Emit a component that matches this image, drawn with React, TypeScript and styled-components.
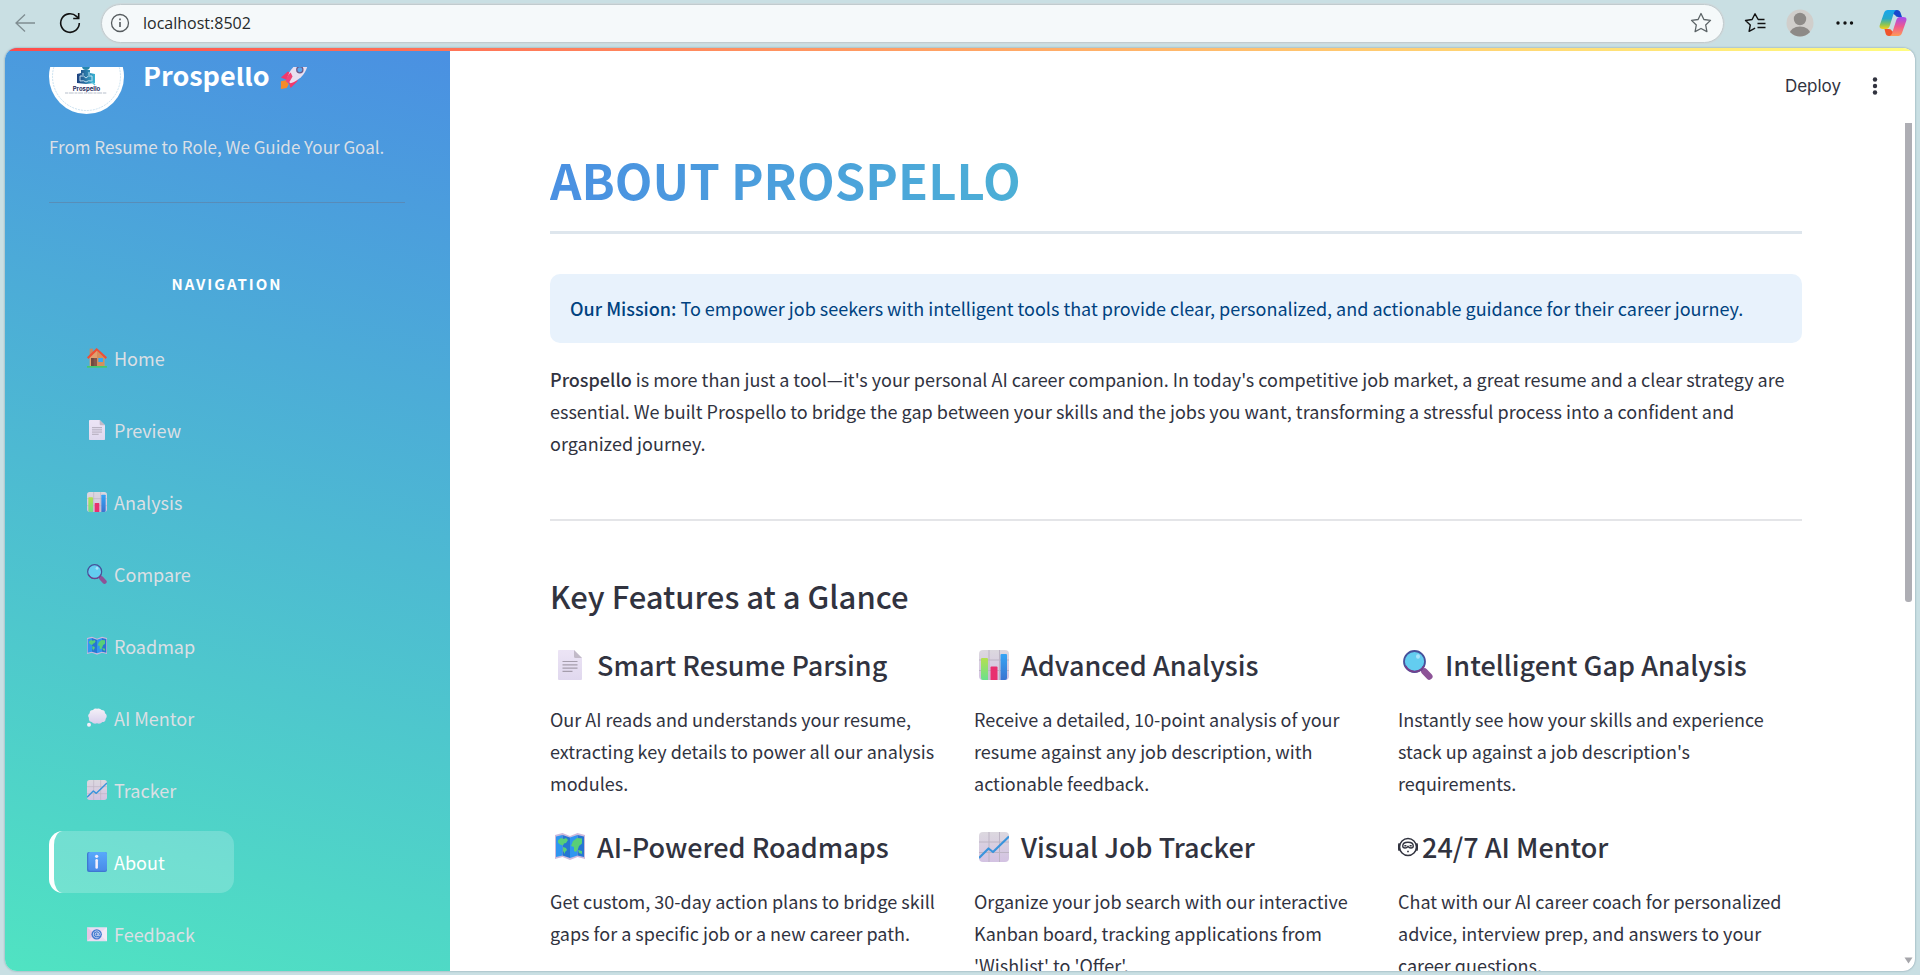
import React from "react";
import styled, { createGlobalStyle, css } from "styled-components";

const fontBody = `"Noto Sans CJK SC", "Open Sans", sans-serif`;

const GlobalStyle = createGlobalStyle`
  *, *::before, *::after { box-sizing: border-box; }
  body { margin: 0; background: #c9dfe3; font-family: ${fontBody}; color: #31333f; }
  h1, h2, h3, p, ul { margin: 0; padding: 0; }
  button { border: 0; background: none; padding: 0; font: inherit; color: inherit; cursor: pointer; }
`;

/* ---------- browser window ---------- */

const Window = styled.div`
  display: flex;
  flex-direction: column;
  height: 100vh;
  overflow: hidden;
  padding: 0 5px 4px;
`;

const Toolbar = styled.header`
  display: flex;
  align-items: center;
  flex: none;
  height: 48px;
  padding: 0 7px 2px 10px;
  color: #111;
`;

const ToolButton = styled.button<{ $space?: number }>`
  display: flex;
  align-items: center;
  justify-content: center;
  width: 20px;
  height: 36px;
  margin-right: ${(p) => p.$space ?? 0}px;
  svg { display: block; flex: none; }
`;

const AddressBar = styled.div`
  display: flex;
  align-items: center;
  flex: 1;
  height: 39px;
  margin-right: 21px;
  padding: 0 12px 0 8px;
  border: 1px solid #c1cbce;
  border-radius: 20px;
  background: #f5f9fa;
  box-shadow: 0 0 0 1px #cdd9dc;
`;

const AddressInput = styled.input`
  flex: 1;
  min-width: 0;
  margin-left: 13px;
  border: 0;
  outline: 0;
  background: none;
  padding: 0;
  font: 16px "Open Sans", sans-serif;
  color: #26292b;
`;

/* ---------- page ---------- */

const Page = styled.div`
  position: relative;
  display: flex;
  flex: 1;
  min-height: 0;
  overflow: hidden;
  border-radius: 12px;
  background: #fff;
  box-shadow: 0 0 2px rgba(60, 90, 110, 0.6);
`;

const Decoration = styled.div`
  position: absolute;
  inset: 0 0 auto 0;
  height: 3px;
  background: linear-gradient(90deg, #ff4b4b, #fffd80);
`;

const Sidebar = styled.aside`
  flex: none;
  width: 445px;
  padding-top: 19px;
  display: flex;
  background: linear-gradient(195deg, #4a90e2, #50e3c2);
`;

const SidebarScroll = styled.div`
  flex: 1;
  min-height: 0;
  overflow: hidden;
  padding: 0 45px 0 44px;
`;

/* The sidebar is scrolled down a little, so the brand row is cut at the top. */
const Brand = styled.div`
  display: flex;
  align-items: center;
  gap: 19px;
  margin-top: -28px;
`;

const BrandName = styled.h1`
  display: flex;
  align-items: center;
  gap: 10px;
  padding-bottom: 4px;
  font-size: 27px;
  line-height: 40px;
  font-weight: 700;
  color: #fff;
`;

const Tagline = styled.p`
  margin-top: 17px;
  font-size: 17px;
  line-height: 32px;
  color: #dadfe6;
`;

const SidebarRule = styled.hr`
  height: 1px;
  margin: 39px 0 0;
  border: 0;
  background: rgba(100, 120, 150, 0.5);
`;

const NavTitle = styled.h2`
  margin: 66px 0 28px;
  text-align: center;
  font-size: 15px;
  line-height: 30px;
  font-weight: 700;
  letter-spacing: 2px;
  color: #fff;
`;

const NavList = styled.ul`
  display: flex;
  flex-direction: column;
  align-items: flex-start;
  gap: 10px;
  list-style: none;
`;

const NavLink = styled.a<{ $active?: boolean }>`
  display: flex;
  align-items: center;
  gap: 7px;
  width: 185px;
  height: 62px;
  padding-left: 33px;
  border-left: 5px solid transparent;
  border-radius: 14px;
  font-size: 18px;
  line-height: 32px;
  text-decoration: none;
  color: #dbdfe4;
  ${(p) =>
    p.$active &&
    css`
      border-left-color: #fff;
      background: rgba(255, 255, 255, 0.2);
      color: #fff;
    `}
`;

const Main = styled.div`
  display: flex;
  flex-direction: column;
  flex: 1;
  min-width: 0;
`;

const AppHeader = styled.div`
  display: flex;
  align-items: center;
  justify-content: flex-end;
  gap: 24px;
  flex: none;
  height: 75px;
  padding-right: 30px;
`;

const DeployButton = styled.button`
  font: 17px/30px Inter, sans-serif;
`;

const ScrollArea = styled.div`
  display: flex;
  flex: 1;
  min-height: 0;
`;

const Content = styled.main`
  flex: 1;
  min-width: 0;
  overflow: hidden;
  padding: 26px 100px 0;
`;

const ScrollTrack = styled.div`
  display: flex;
  flex-direction: column;
  align-items: center;
  justify-content: space-between;
  flex: none;
  width: 13px;
  padding-bottom: 7px;
`;

const ScrollThumb = styled.div`
  width: 7px;
  height: 57%;
  border-radius: 0 0 3px 3px;
  background: #aeaeb4;
`;

const PageTitle = styled.h1`
  padding-bottom: 22px;
  border-bottom: 3px solid #dee6ed;
  font-size: 49px;
  line-height: 60px;
  font-weight: 700;
`;

const GradientText = styled.span`
  display: block;
  background: linear-gradient(90deg, #4a90e2, #50e3c2);
  background-clip: text;
  -webkit-background-clip: text;
  color: transparent;
`;

const Callout = styled.p`
  margin: 40px 0 20px;
  padding: 18px 20px 19px;
  border-radius: 10px;
  background: #e8f2fc;
  font-size: 18px;
  line-height: 32px;
  color: #004280;
`;

const Text = styled.p`
  font-size: 18px;
  line-height: 32px;
`;

const Strong = styled.strong`
  font-weight: 500;
`;

const Rule = styled.hr`
  height: 2px;
  margin: 60px 0 55px;
  border: 0;
  background: #e4e5e8;
`;

const SectionTitle = styled.h2`
  margin-bottom: 29px;
  font-size: 31px;
  line-height: 40px;
  font-weight: 500;
`;

const Features = styled.div`
  display: grid;
  grid-template-columns: repeat(3, minmax(0, 1fr));
  gap: 28px 20px;
`;

const Feature = styled.article`
  padding-right: 16px;
`;

const FeatureTitle = styled.h3<{ $compact?: boolean }>`
  display: flex;
  align-items: center;
  gap: ${(p) => (p.$compact ? 4 : 12)}px;
  margin-bottom: 18px;
  padding-left: ${(p) => (p.$compact ? 0 : 5)}px;
  font-size: 27px;
  line-height: 40px;
  font-weight: 500;
`;

/* ---------- drawings ---------- */

type IconProps = { size: number };

const IconSvg = styled.svg`
  flex: none;
`;

const Svg = ({ size, children }: IconProps & { children: React.ReactNode }) => (
  <IconSvg width={size} height={size} viewBox="0 0 30 30" aria-hidden="true">
    {children}
  </IconSvg>
);

const HouseIcon = ({ size }: IconProps) => (
  <Svg size={size}>
    <rect x="4" y="1" width="5" height="11" fill="#c58a63" />
    <path d="M4 13 15 3l11 10v15H4z" fill="#e2a06e" />
    <path d="M15 3l11 10v15H15z" fill="#d4905f" />
    <rect x="6" y="15" width="9" height="13" fill="#70483f" />
    <rect x="10" y="15" width="5" height="13" fill="#84564a" />
    <rect x="17" y="15" width="7" height="6" fill="#35a8f5" />
    <path d="M0 14 14.500 0 30 14l-2 2.500L15 4 2 16.500z" fill="#ef4f35" />
    <path d="M0 27h30v2.500H0z" fill="#45c96b" />
  </Svg>
);

const PageIcon = ({ size }: IconProps) => (
  <Svg size={size}>
    <defs>
      <linearGradient id="paper" x1="0" y1="0" x2="0" y2="1">
        <stop offset="0" stopColor="#ece4f5" />
        <stop offset="1" stopColor="#e0d8ee" />
      </linearGradient>
    </defs>
    <path d="M4 0h15l8 8v21a1 1 0 0 1-1 1H4a1 1 0 0 1-1-1V1a1 1 0 0 1 1-1z" fill="url(#paper)" />
    <path d="M19 0l8 8h-6.500A1.500 1.500 0 0 1 19 6.500z" fill="#c2bac8" />
    <path d="M7.500 11.500h15M7.500 14.800h15M7.500 18.100h15M7.500 21.400h10" stroke="#a59dac" strokeWidth="1.200" />
  </Svg>
);

const GridTile = () => (
  <>
    <defs>
      <linearGradient id="tile" x1="0" y1="0" x2="0" y2="1">
        <stop offset="0" stopColor="#dcd8df" />
        <stop offset="1" stopColor="#d3c2e2" />
      </linearGradient>
    </defs>
    <rect width="30" height="30" rx="4" fill="url(#tile)" />
    <path d="M10 0v30M20.500 0v30M0 10h30M0 20.500h30" stroke="#bdb4c4" strokeWidth="1" />
  </>
);

const BarsIcon = ({ size }: IconProps) => (
  <Svg size={size}>
    <defs>
      <linearGradient id="barG" x1="0" y1="0" x2="0" y2="1">
        <stop offset="0" stopColor="#b4e04f" />
        <stop offset="1" stopColor="#6be08d" />
      </linearGradient>
      <linearGradient id="barB" x1="0" y1="0" x2="0" y2="1">
        <stop offset="0" stopColor="#35a5f5" />
        <stop offset="1" stopColor="#3b74d0" />
      </linearGradient>
    </defs>
    <GridTile />
    <path d="M2 9q0-1 1-1h5q1 0 1 1v21H4q-2 0-2-2z" fill="url(#barG)" />
    <path d="M11.500 17.500q0-1 1-1h5q1 0 1 1V30h-7z" fill="#e8306f" />
    <path d="M21.500 5q0-1 1-1h4.500q1 0 1 1v23q0 2-2 2h-4.500z" fill="url(#barB)" />
  </Svg>
);

const LensIcon = ({ size }: IconProps) => (
  <Svg size={size}>
    <path d="M17.500 18.500 26.500 27" stroke="#6f4683" strokeWidth="3" />
    <path d="M21.500 21.500 26.300 26.500" stroke="#8d5397" strokeWidth="6.500" strokeLinecap="round" />
    <circle cx="11.500" cy="11.500" r="10.500" fill="#63cdf0" stroke="#46509a" strokeWidth="1.800" />
    <path d="M2.500 16a10.500 10.500 0 0 0 18.500 0" fill="none" stroke="#76408c" strokeWidth="1.800" />
    <ellipse cx="15" cy="6.500" rx="2" ry="2.300" fill="#a9e4fb" />
  </Svg>
);

const MapIcon = ({ size }: IconProps) => (
  <Svg size={size}>
    <path d="M0 3l7.500-2 7.500 3 7.500-3L30 3v24l-7.500-2-7.500 3-7.500-3L0 27z" fill="#cdb9dc" />
    <path d="M1 4.500 7.500 3v20.500L1 25zM15 5.500 22.500 3v20.500L15 26z" fill="#2f96f0" />
    <path d="M7.500 3 15 5.500V26l-7.500-2.500zM22.500 3 29 4.500V25l-6.500-1.500z" fill="#2676d2" />
    <path d="M3 8.500 6 6l3 1 2-1 2 2-2 3-2 .500-1 2-3-1-2-2zM8 15l3 1 1 2-2 2v2l-2-3zM16 14l2-5 4-3 5 .500v5L24 14l-1 3-2 3-2-1v-4zM23 18l4 1v3l-3-1z" fill="#58cf78" />
  </Svg>
);

const ThoughtIcon = ({ size }: IconProps) => (
  <Svg size={size}>
    <defs>
      <linearGradient id="cloud" x1="0" y1="0" x2="0" y2="1">
        <stop offset="0" stopColor="#f5f1f8" />
        <stop offset="1" stopColor="#d8cfec" />
      </linearGradient>
    </defs>
    <path d="M9 3a6 6 0 0 1 6-2 6.500 6.500 0 0 1 7 2 5 5 0 0 1 5 5 5 5 0 0 1 1 8 5 5 0 0 1-5 5 7 7 0 0 1-8 2 7 7 0 0 1-8-2 5 5 0 0 1-4-6 5 5 0 0 1 1-7 5 5 0 0 1 5-5z" fill="url(#cloud)" />
    <circle cx="3" cy="25" r="3" fill="#f3eefa" />
  </Svg>
);

const TrendIcon = ({ size }: IconProps) => (
  <Svg size={size}>
    <GridTile />
    <path d="M0 26 9.500 16.500l4.500 3.500L30 4.500" fill="none" stroke="#3a94dc" strokeWidth="2.200" strokeLinejoin="round" />
  </Svg>
);

const InfoIcon = ({ size }: IconProps) => (
  <Svg size={size}>
    <defs>
      <linearGradient id="info" x1="0" y1="0" x2="0" y2="1">
        <stop offset="0" stopColor="#58a9fb" />
        <stop offset="1" stopColor="#4a8be8" />
      </linearGradient>
    </defs>
    <rect width="30" height="30" rx="3" fill="#3e78d2" />
    <rect x="2" width="28" height="28" rx="3" fill="url(#info)" />
    <circle cx="14.500" cy="6.500" r="2.400" fill="#f4eefb" />
    <rect x="12.600" y="10.500" width="3.800" height="14.500" rx="1.900" fill="#f4eefb" />
  </Svg>
);

const MailIcon = ({ size }: IconProps) => (
  <Svg size={size}>
    <rect y="5" width="30" height="21" rx="1" fill="#e8dcf2" />
    <path d="M0 5l12 10L0 26z" fill="#e3c6e4" />
    <path d="M30 5 18 15l12 11z" fill="#f1eaf7" />
    <circle cx="14.500" cy="15.500" r="7.800" fill="#3f78d0" />
    <circle cx="14.500" cy="15.500" r="2.200" fill="none" stroke="#dfe3f5" strokeWidth="1.300" />
    <path d="M16.800 13v3.200a1.500 1.500 0 0 0 3 0 5.200 5.200 0 1 0-2.300 3.700" fill="none" stroke="#dfe3f5" strokeWidth="1.200" />
  </Svg>
);

const RocketIcon = () => (
  <svg width="29" height="29" viewBox="0 0 30 30" aria-hidden="true">
    <path d="M1 22l5-1 3 4-2 4-6 1z" fill="#f58b29" />
    <path d="M1 18l7-6 5 2-5 7zM11 29l7-7 0-6-9 7z" fill="#f0386c" />
    <path d="M7 21C9 9 18 1 29 1c0 11-8 20-18 23z" fill="#e8dff0" />
    <path d="M23 1.500q4-.500 6-.500 0 3-.600 6z" fill="#e2355f" />
    <path d="M6 22q1-6 5-9l2 4-4 7z" fill="#f04478" />
    <circle cx="20.500" cy="10" r="3.200" fill="#58a8ef" stroke="#6a5a8a" strokeWidth="1.300" />
  </svg>
);

const FaceIcon = () => (
  <IconSvg width="20" height="20" viewBox="0 0 19 19" fill="none" stroke="#31333f" aria-hidden="true">
    <circle cx="9.500" cy="9.500" r="8" strokeWidth="1.400" />
    <path d="M1.500 6Q0 9.500 1.500 13M17.500 6q1.500 3.500 0 7" strokeWidth="2" />
    <path d="M4.500 8.500q0-3.500 5-3.500t5 3.500q0 2-2.200 2-1.800 0-2.800-1.500-1 1.500-2.800 1.500-2.200 0-2.200-2z" strokeWidth="1.300" />
    <path d="M6 8.300h2M11 8.300h2" strokeWidth="1.500" />
    <path d="M8.700 13.800h1.600" strokeWidth="1.400" />
  </IconSvg>
);

const BrandLogo = () => (
  <IconSvg width="75" height="75" viewBox="0 0 75 75" aria-label="Prospello logo" role="img">
    <defs>
      <linearGradient id="mark" x1="0" y1="0" x2="1" y2="0">
        <stop offset="0" stopColor="#1d3f7d" />
        <stop offset="1" stopColor="#39b3d3" />
      </linearGradient>
    </defs>
    <circle cx="37.500" cy="37.500" r="37.500" fill="#fff" />
    <circle cx="37.500" cy="37.500" r="34" fill="none" stroke="#a9cfe6" strokeWidth=".600" strokeDasharray="2 1" />
    <circle cx="37" cy="27" r="4" fill="#2687ae" />
    <path d="M28 35l4-1v-3h9v3l5 1v9l-9 1-9-1z" fill="url(#mark)" />
    <path d="M31 37q4-1 6 2 2-3 6-2v5q-4-1-6 1-2-2-6-1zM34 34v2M40 33v3" fill="none" stroke="#cfe9f5" strokeWidth=".900" />
    <path d="M42 42l4 4" stroke="#58c3dd" strokeWidth="1.400" />
    <text x="37.500" y="51.500" textAnchor="middle" fontFamily="Inter, sans-serif" fontWeight="700" fontSize="6" fill="#1f2a5a">Prospello</text>
    <path d="M16 54h42" stroke="#9aa3b5" strokeWidth=".700" strokeDasharray="3 .7 5 .8" />
  </IconSvg>
);

const BackIcon = () => (
  <svg width="20" height="20" viewBox="0 0 20 20" fill="none" stroke="#7f8d91" strokeWidth="1.300">
    <path d="M20 10H1M10 1.500 1 10l9 8.500" />
  </svg>
);

const ReloadIcon = () => (
  <svg width="22" height="22" viewBox="0 0 22 22" fill="none" stroke="#111" strokeWidth="1.600">
    <path d="M20.300 11A9.300 9.300 0 1 1 17.500 4.400L19.500 6.300" />
    <path d="M19.700 1v5.500h-5.500" />
  </svg>
);

const SiteInfoIcon = () => (
  <svg width="20" height="20" viewBox="0 0 20 20" fill="none" stroke="#555b5e" strokeWidth="1.300">
    <circle cx="10" cy="10" r="8.500" />
    <path d="M10 9v5M10 5.600v1.600" strokeWidth="1.600" />
  </svg>
);

const StarIcon = () => (
  <svg width="22" height="22" viewBox="0 0 22 22" fill="none" stroke="#5c6467" strokeWidth="1.300" strokeLinejoin="round">
    <path d="M11 1.500l2.900 6 6.600.900-4.800 4.600 1.200 6.600L11 16.500l-5.900 3.100L6.300 13 1.500 8.400l6.600-.900z" />
  </svg>
);

const FavoritesIcon = () => (
  <svg width="22" height="22" viewBox="0 0 22 22" fill="none" stroke="#111" strokeWidth="1.400" strokeLinejoin="round">
    <path d="M20.500 7.500h-6.300L11 1.800 8.100 7.500l-6.600 1L6.300 13l-1.200 6.400 6-3.200M13.500 11.500h8M13.500 15.500h8" />
  </svg>
);

const Avatar = () => (
  <svg width="28" height="28" viewBox="0 0 28 28">
    <defs>
      <clipPath id="avatarClip">
        <circle cx="14" cy="14" r="13.500" />
      </clipPath>
    </defs>
    <circle cx="14" cy="14" r="13.500" fill="#d0cecb" />
    <g clipPath="url(#avatarClip)" fill="#8d8a87">
      <circle cx="14" cy="10" r="6.200" />
      <ellipse cx="14" cy="25" rx="10.500" ry="7.500" />
    </g>
  </svg>
);

const MoreIcon = () => (
  <svg width="18" height="4" viewBox="0 0 18 4" fill="#111">
    <circle cx="2" cy="2" r="1.700" />
    <circle cx="9" cy="2" r="1.700" />
    <circle cx="15.500" cy="2" r="1.700" />
  </svg>
);

const CopilotIcon = () => (
  <svg width="28" height="28" viewBox="0 0 28 28">
    <defs>
      <linearGradient id="cpA" x1="0" y1="0" x2="0" y2="1">
        <stop offset="0" stopColor="#16a5ee" />
        <stop offset=".45" stopColor="#27a9c9" />
        <stop offset=".75" stopColor="#86c45a" />
        <stop offset="1" stopColor="#f6cf1a" />
      </linearGradient>
      <linearGradient id="cpB" x1="0" y1="0" x2="0" y2="1">
        <stop offset="0" stopColor="#a24cf0" />
        <stop offset=".5" stopColor="#ee5a90" />
        <stop offset="1" stopColor="#ff9a55" />
      </linearGradient>
    </defs>
    <path d="M8 1h10q3 0 4 4l1 3h-4q-2 0-3-2z" fill="#1848cc" />
    <path d="M20 27H10q-3 0-3.500-3L5.500 20H10q2 0 3 2z" fill="#f0542c" />
    <path d="M18 1H9Q6 1 5 4L.800 16Q-.500 20 4 20h3q3 0 4-4l3.500-11Q15.500 1 18 1z" fill="url(#cpA)" />
    <path d="M10 27h9q3 0 4-3l4.200-12Q28.500 8 24 8h-3q-3 0-4 4l-3.500 11Q12.500 27 10 27z" fill="url(#cpB)" />
  </svg>
);

const KebabIcon = () => (
  <svg width="18" height="18" viewBox="0 0 18 18" fill="#31333f">
    <circle cx="9" cy="2.500" r="2.200" />
    <circle cx="9" cy="9" r="2.200" />
    <circle cx="9" cy="15.500" r="2.200" />
  </svg>
);

/* ---------- data ---------- */

const navItems = [
  { label: "Home", Icon: HouseIcon },
  { label: "Preview", Icon: PageIcon },
  { label: "Analysis", Icon: BarsIcon },
  { label: "Compare", Icon: LensIcon },
  { label: "Roadmap", Icon: MapIcon },
  { label: "AI Mentor", Icon: ThoughtIcon },
  { label: "Tracker", Icon: TrendIcon },
  { label: "About", Icon: InfoIcon, active: true },
  { label: "Feedback", Icon: MailIcon },
];

const features = [
  { title: "Smart Resume Parsing", Icon: PageIcon, text: "Our AI reads and understands your resume, extracting key details to power all our analysis modules." },
  { title: "Advanced Analysis", Icon: BarsIcon, text: "Receive a detailed, 10-point analysis of your resume against any job description, with actionable feedback." },
  { title: "Intelligent Gap Analysis", Icon: LensIcon, text: "Instantly see how your skills and experience stack up against a job description's requirements." },
  { title: "AI-Powered Roadmaps", Icon: MapIcon, text: "Get custom, 30-day action plans to bridge skill gaps for a specific job or a new career path." },
  { title: "Visual Job Tracker", Icon: TrendIcon, text: "Organize your job search with our interactive Kanban board, tracking applications from 'Wishlist' to 'Offer'." },
  { title: "24/7 AI Mentor", Icon: null, text: "Chat with our AI career coach for personalized advice, interview prep, and answers to your career questions." },
];

export default function App() {
  return (
    <Window>
      <GlobalStyle />
      <Toolbar>
        <ToolButton aria-label="Back" $space={25}><BackIcon /></ToolButton>
        <ToolButton aria-label="Reload" $space={21}><ReloadIcon /></ToolButton>
        <AddressBar>
          <ToolButton aria-label="Site information"><SiteInfoIcon /></ToolButton>
          <AddressInput aria-label="Address" defaultValue="localhost:8502" />
          <ToolButton aria-label="Add to favorites"><StarIcon /></ToolButton>
        </AddressBar>
        <ToolButton aria-label="Favorites" $space={25}><FavoritesIcon /></ToolButton>
        <ToolButton aria-label="Profile" $space={25}><Avatar /></ToolButton>
        <ToolButton aria-label="More" $space={28}><MoreIcon /></ToolButton>
        <ToolButton aria-label="Copilot" $space={5}><CopilotIcon /></ToolButton>
      </Toolbar>

      <Page>
        <Sidebar>
          <SidebarScroll>
            <Brand>
              <BrandLogo />
              <BrandName>Prospello <RocketIcon /></BrandName>
            </Brand>
            <Tagline>From Resume to Role, We Guide Your Goal.</Tagline>
            <SidebarRule />
            <nav aria-labelledby="nav-title">
              <NavTitle id="nav-title">NAVIGATION</NavTitle>
              <NavList>
                {navItems.map(({ label, Icon, active }) => (
                  <li key={label}>
                    <NavLink href="#" $active={active} aria-current={active ? "page" : undefined}>
                      <Icon size={20} />
                      {label}
                    </NavLink>
                  </li>
                ))}
              </NavList>
            </nav>
          </SidebarScroll>
        </Sidebar>

        <Main>
          <AppHeader>
            <DeployButton>Deploy</DeployButton>
            <ToolButton aria-label="Menu"><KebabIcon /></ToolButton>
          </AppHeader>
          <ScrollArea>
            <Content>
              <PageTitle><GradientText>ABOUT PROSPELLO</GradientText></PageTitle>
              <Callout>
                <Strong>Our Mission:</Strong> To empower job seekers with intelligent tools that provide clear, personalized, and actionable guidance for their career journey.
              </Callout>
              <Text>
                <Strong>Prospello</Strong> is more than just a tool—it's your personal AI career companion. In today's competitive job market, a great resume and a clear strategy are essential. We built Prospello to bridge the gap between your skills and the jobs you want, transforming a stressful process into a confident and organized journey.
              </Text>
              <Rule />
              <SectionTitle>Key Features at a Glance</SectionTitle>
              <Features>
                {features.map(({ title, Icon, text }) => (
                  <Feature key={title}>
                    <FeatureTitle $compact={!Icon}>
                      {Icon ? <Icon size={30} /> : <FaceIcon />}
                      {title}
                    </FeatureTitle>
                    <Text>{text}</Text>
                  </Feature>
                ))}
              </Features>
            </Content>
            <ScrollTrack>
              <ScrollThumb />
              <svg width="9" height="7" viewBox="0 0 9 7" aria-hidden="true"><path d="M.5.5h8L4.500 6.500z" fill="#a5a5aa" /></svg>
            </ScrollTrack>
          </ScrollArea>
        </Main>
        <Decoration />
      </Page>
    </Window>
  );
}
